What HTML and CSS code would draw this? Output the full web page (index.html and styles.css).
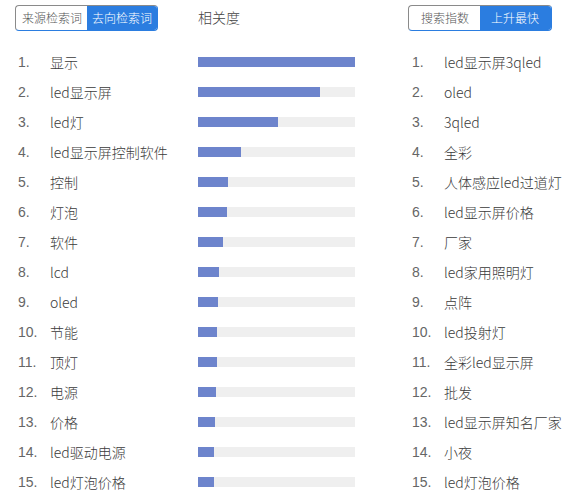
FILE: index.html
```html
<!DOCTYPE html>
<html lang="zh">
<head>
<meta charset="utf-8">
<link rel="stylesheet" href="styles.css">
</head>
<body>
<div class="board">
  <div class="head left-head">
    <div class="toggle">
      <span class="tab">来源检索词</span><span class="tab active">去向检索词</span>
    </div>
  </div>
  <div class="head mid-head">相关度</div>
  <div class="head right-head">
    <div class="toggle">
      <span class="tab">搜索指数</span><span class="tab active">上升最快</span>
    </div>
  </div>

  <div class="col left-col">
    <div class="row"><span class="num">1.</span><span class="word">显示</span></div>
    <div class="row"><span class="num">2.</span><span class="word">led显示屏</span></div>
    <div class="row"><span class="num">3.</span><span class="word">led灯</span></div>
    <div class="row"><span class="num">4.</span><span class="word">led显示屏控制软件</span></div>
    <div class="row"><span class="num">5.</span><span class="word">控制</span></div>
    <div class="row"><span class="num">6.</span><span class="word">灯泡</span></div>
    <div class="row"><span class="num">7.</span><span class="word">软件</span></div>
    <div class="row"><span class="num">8.</span><span class="word">lcd</span></div>
    <div class="row"><span class="num">9.</span><span class="word">oled</span></div>
    <div class="row"><span class="num">10.</span><span class="word">节能</span></div>
    <div class="row"><span class="num">11.</span><span class="word">顶灯</span></div>
    <div class="row"><span class="num">12.</span><span class="word">电源</span></div>
    <div class="row"><span class="num">13.</span><span class="word">价格</span></div>
    <div class="row"><span class="num">14.</span><span class="word">led驱动电源</span></div>
    <div class="row"><span class="num">15.</span><span class="word">led灯泡价格</span></div>
  </div>

  <div class="col mid-col">
    <div class="row"><div class="track"><div class="fill" style="width:157px"></div></div></div>
    <div class="row"><div class="track"><div class="fill" style="width:122px"></div></div></div>
    <div class="row"><div class="track"><div class="fill" style="width:80px"></div></div></div>
    <div class="row"><div class="track"><div class="fill" style="width:43px"></div></div></div>
    <div class="row"><div class="track"><div class="fill" style="width:30px"></div></div></div>
    <div class="row"><div class="track"><div class="fill" style="width:29px"></div></div></div>
    <div class="row"><div class="track"><div class="fill" style="width:25px"></div></div></div>
    <div class="row"><div class="track"><div class="fill" style="width:21px"></div></div></div>
    <div class="row"><div class="track"><div class="fill" style="width:20px"></div></div></div>
    <div class="row"><div class="track"><div class="fill" style="width:19px"></div></div></div>
    <div class="row"><div class="track"><div class="fill" style="width:19px"></div></div></div>
    <div class="row"><div class="track"><div class="fill" style="width:18px"></div></div></div>
    <div class="row"><div class="track"><div class="fill" style="width:17px"></div></div></div>
    <div class="row"><div class="track"><div class="fill" style="width:16px"></div></div></div>
    <div class="row"><div class="track"><div class="fill" style="width:16px"></div></div></div>
  </div>

  <div class="col right-col">
    <div class="row"><span class="num">1.</span><span class="word">led显示屏3qled</span></div>
    <div class="row"><span class="num">2.</span><span class="word">oled</span></div>
    <div class="row"><span class="num">3.</span><span class="word">3qled</span></div>
    <div class="row"><span class="num">4.</span><span class="word">全彩</span></div>
    <div class="row"><span class="num">5.</span><span class="word">人体感应led过道灯</span></div>
    <div class="row"><span class="num">6.</span><span class="word">led显示屏价格</span></div>
    <div class="row"><span class="num">7.</span><span class="word">厂家</span></div>
    <div class="row"><span class="num">8.</span><span class="word">led家用照明灯</span></div>
    <div class="row"><span class="num">9.</span><span class="word">点阵</span></div>
    <div class="row"><span class="num">10.</span><span class="word">led投射灯</span></div>
    <div class="row"><span class="num">11.</span><span class="word">全彩led显示屏</span></div>
    <div class="row"><span class="num">12.</span><span class="word">批发</span></div>
    <div class="row"><span class="num">13.</span><span class="word">led显示屏知名厂家</span></div>
    <div class="row"><span class="num">14.</span><span class="word">小夜</span></div>
    <div class="row"><span class="num">15.</span><span class="word">led灯泡价格</span></div>
  </div>
</div>
</body>
</html>
```

FILE: styles.css
```css
html, body {
  margin: 0;
  padding: 0;
  background: #ffffff;
}

body {
  font-family: "Noto Sans CJK SC", "Noto Sans", sans-serif;
  font-weight: 300;
  color: #333333;
  width: 586px;
  height: 503px;
  overflow: hidden;
}

.board {
  display: grid;
  grid-template-columns: 198px 157px 1fr;
  grid-template-rows: 47px auto;
}

.head {
  display: flex;
  align-items: flex-start;
}

.left-head {
  padding: 5px 0 0 15px;
}

.mid-head {
  font-size: 14px;
  line-height: 20px;
  padding-top: 7px;
  color: #444444;
}

.right-head {
  padding: 5px 0 0 53px;
}

.toggle {
  display: flex;
  height: 26px;
  border: 1px solid #8a8a8a;
  border-color: #8a8a8a #2b7de0 #2b7de0 #8a8a8a;
  border-radius: 4px;
  overflow: hidden;
  box-sizing: border-box;
  background: #ffffff;
}

.tab {
  display: flex;
  align-items: center;
  font-size: 12px;
  line-height: 24px;
  color: #555555;
}

.left-head .tab {
  padding: 0 5px 0 6px;
}

.left-head .tab.active {
  padding: 0 5px 0 5px;
}

.right-head .tab {
  padding: 0 11px 0 12px;
}

.right-head .tab.active {
  padding: 0 12px 0 11px;
}

.tab.active {
  background: #2b7de0;
  color: #ffffff;
}

.col {
  display: flex;
  flex-direction: column;
}

.row {
  height: 30px;
  display: flex;
  align-items: center;
  font-size: 14px;
  white-space: nowrap;
}

.left-col .row {
  padding-left: 18px;
}

.right-col .row {
  padding-left: 57px;
}

.num {
  width: 32px;
  flex: none;
  color: #666666;
  font-family: "Liberation Sans", "Noto Sans CJK SC", sans-serif;
  font-weight: 400;
  font-size: 14px;
}

.word {
  color: #3a3a3a;
}

.track {
  width: 157px;
  height: 10px;
  background: #efefef;
}

.fill {
  height: 10px;
  background: #6d84cc;
}
```
